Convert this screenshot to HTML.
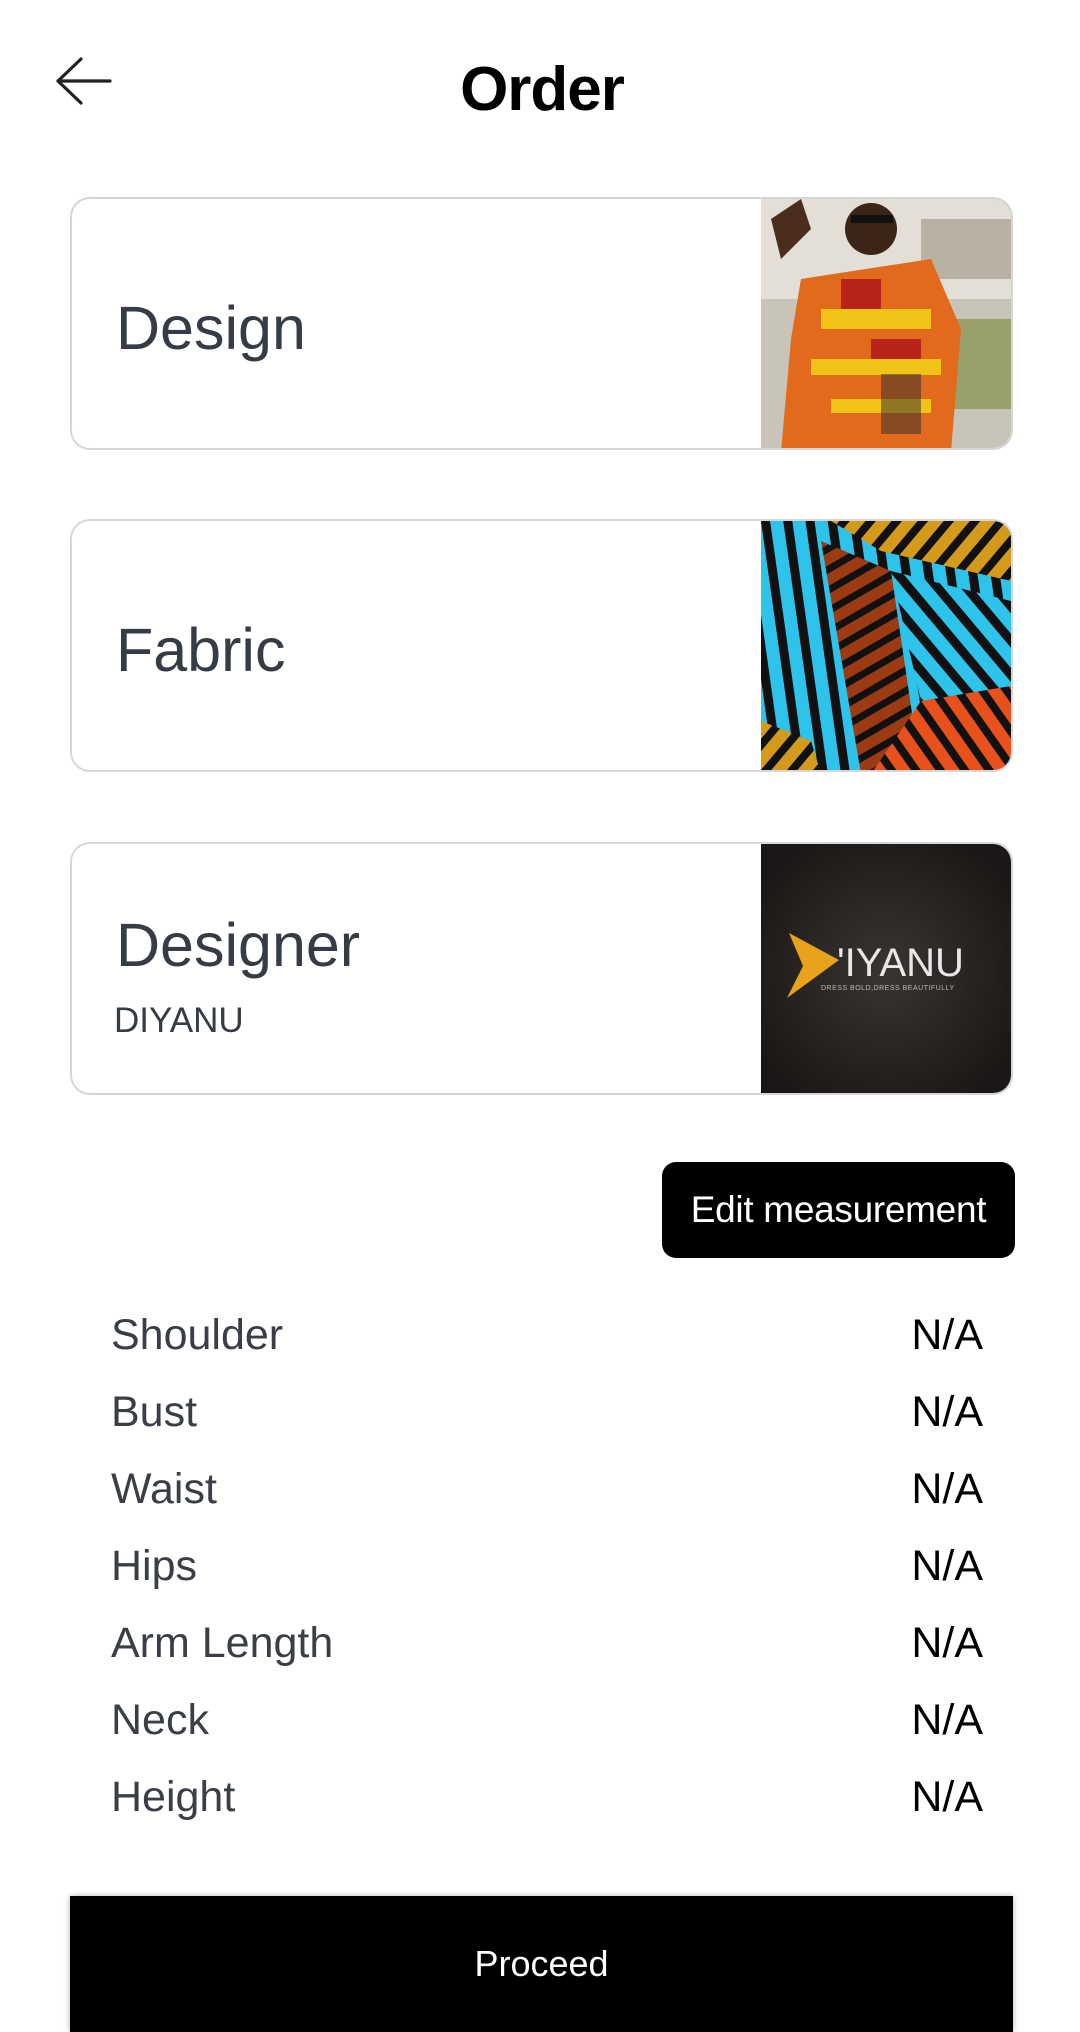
<!DOCTYPE html>
<html><head><meta charset="utf-8"><style>
*{margin:0;padding:0;box-sizing:border-box}
body{width:1080px;height:2032px;background:#fff;font-family:"Liberation Sans",sans-serif;position:relative;overflow:hidden}
.abs{position:absolute}
.card{position:absolute;left:70px;width:943px;height:253px;border:2px solid #d6d6d6;border-radius:20px;overflow:hidden;background:#fff}
.card .t{position:absolute;left:44px;font-size:61px;color:#363c45;line-height:1}
.card svg{position:absolute;right:0;top:0}
.lbl{position:absolute;left:111px;font-size:43px;color:#3a3f47;line-height:1}
.val{position:absolute;right:97px;font-size:43px;color:#000;line-height:1}
</style></head><body>
<svg class="abs" style="left:54px;top:56px" width="60" height="50" viewBox="0 0 60 50"><path d="M56 25H4M27 3L4 25l23 22" fill="none" stroke="#222" stroke-width="3.2" stroke-linecap="round" stroke-linejoin="round"/></svg>
<div class="abs" style="left:0;width:1084px;top:54px;text-align:center;font-size:62px;font-weight:bold;color:#000;letter-spacing:-1px">Order</div>

<div class="card" style="top:197px"><div class="t" style="top:99px">Design</div>
<svg width="250" height="253" viewBox="0 0 250 253">
<rect width="250" height="253" fill="#c9c4b8"/>
<rect width="250" height="100" fill="#e4dfd6"/>
<rect x="160" y="20" width="90" height="60" fill="#b9b2a4"/>
<rect x="180" y="120" width="70" height="90" fill="#9aa06c"/>
<path d="M40 80 L170 60 L200 130 L190 253 L20 253 L30 140Z" fill="#e26a1c"/>
<path d="M60 110h110v20H60zM50 160h130v16H50zM70 200h100v14H70z" fill="#f2c317"/>
<path d="M80 80h40v30H80zM110 140h50v20h-50z" fill="#b8231a"/>
<rect x="120" y="175" width="40" height="60" fill="#2b2b2b" opacity=".5"/>
<circle cx="110" cy="30" r="26" fill="#3b2518"/>
<rect x="90" y="16" width="42" height="8" fill="#111"/>
<path d="M10 20 L40 0 L50 30 L20 60Z" fill="#4a2d1c"/>
</svg></div>

<div class="card" style="top:519px"><div class="t" style="top:99px">Fabric</div>
<svg width="250" height="253" viewBox="0 0 250 253">
<defs>
<pattern id="p1" width="22" height="22" patternUnits="userSpaceOnUse" patternTransform="rotate(-8)"><rect width="22" height="22" fill="#2ec3ea"/><rect width="9" height="22" fill="#111"/></pattern>
<pattern id="p2" width="20" height="20" patternUnits="userSpaceOnUse" patternTransform="rotate(40)"><rect width="20" height="20" fill="#d49a1c"/><rect width="8" height="20" fill="#111"/></pattern>
<pattern id="p3" width="20" height="20" patternUnits="userSpaceOnUse" patternTransform="rotate(-35)"><rect width="20" height="20" fill="#e8501c"/><rect width="8" height="20" fill="#111"/></pattern>
<pattern id="p4" width="22" height="22" patternUnits="userSpaceOnUse" patternTransform="rotate(-40)"><rect width="22" height="22" fill="#2ec3ea"/><rect width="9" height="22" fill="#111"/></pattern>
<pattern id="p5" width="18" height="18" patternUnits="userSpaceOnUse" patternTransform="rotate(60)"><rect width="18" height="18" fill="#9c3a14"/><rect width="7" height="18" fill="#111"/></pattern>
</defs>
<rect width="250" height="253" fill="url(#p1)"/>
<path d="M70 0H250V60L120 30Z" fill="url(#p2)"/>
<path d="M60 20L130 50L160 253H100Z" fill="url(#p5)"/>
<path d="M130 50L250 80V170L160 180Z" fill="url(#p4)"/>
<path d="M160 180L250 165V253H110Z" fill="url(#p3)"/>
<path d="M0 200L50 220L60 253H0Z" fill="url(#p2)"/>
</svg></div>

<div class="card" style="top:842px"><div class="t" style="top:71px">Designer</div>
<div class="abs" style="left:42px;top:157px;font-size:35px;color:#363c45">DIYANU</div>
<svg width="250" height="253" viewBox="0 0 250 253">
<defs><radialGradient id="g" cx="50%" cy="50%" r="60%"><stop offset="0" stop-color="#3a3533"/><stop offset="1" stop-color="#1a1716"/></radialGradient></defs>
<rect width="250" height="253" fill="url(#g)"/>
<path d="M28 89 L78 116 L26 154 L42 122Z" fill="#e9a21c"/>
<text x="76" y="132" font-family="Liberation Sans,sans-serif" font-size="40" fill="#e8e8e8">'IYANU</text>
<text x="60" y="146" font-family="Liberation Sans,sans-serif" font-size="7" fill="#bbb" letter-spacing="0.5">DRESS BOLD,DRESS BEAUTIFULLY</text>
</svg></div>

<div class="abs" style="left:662px;top:1162px;width:353px;height:96px;background:#000;border-radius:14px;color:#fff;font-size:37px;line-height:96px;text-align:center;letter-spacing:-0.3px">Edit measurement</div>

<div class="lbl" style="top:1314px">Shoulder</div><div class="val" style="top:1314px">N/A</div>
<div class="lbl" style="top:1391px">Bust</div><div class="val" style="top:1391px">N/A</div>
<div class="lbl" style="top:1468px">Waist</div><div class="val" style="top:1468px">N/A</div>
<div class="lbl" style="top:1545px">Hips</div><div class="val" style="top:1545px">N/A</div>
<div class="lbl" style="top:1622px">Arm Length</div><div class="val" style="top:1622px">N/A</div>
<div class="lbl" style="top:1699px">Neck</div><div class="val" style="top:1699px">N/A</div>
<div class="lbl" style="top:1776px">Height</div><div class="val" style="top:1776px">N/A</div>

<div class="abs" style="left:70px;top:1896px;width:943px;height:136px;background:#000;color:#fff;font-size:36px;text-align:center;line-height:136px;box-shadow:0 0 6px rgba(0,0,0,.3)">Proceed</div>
</body></html>
